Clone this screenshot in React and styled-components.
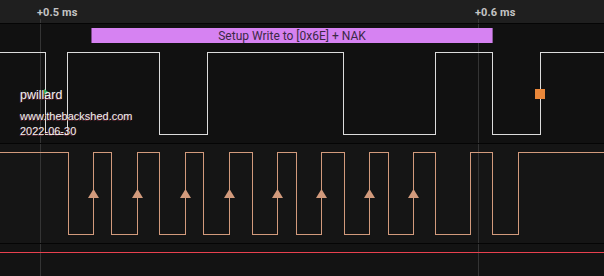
import React from 'react';
import styled, { createGlobalStyle } from 'styled-components';

const GlobalStyle = createGlobalStyle`
    html, body { margin: 0; padding: 0; background: #111; }
    body { font-family: Roboto, "Liberation Sans", sans-serif; }
`;

const WIDTH = 604;
const GRID = [40, 478];

const Screen = styled.div`
    width: ${WIDTH}px; height: 276px; overflow: hidden;
    display: flex; flex-direction: column;
    background: #141414;
`;

const TimeAxis = styled.div`
    height: 23px; flex: none; position: relative;
    background: #1f1f1f; border-bottom: 1px solid #050505;
`;

const TimeLabel = styled.span`
    position: absolute; top: 6px; left: ${p => p.$x}px;
    font-size: 11px; font-weight: 700; letter-spacing: 0.1px;
    color: #c4c4c4;
`;

const Tick = styled.i`
    position: absolute; left: ${p => p.$x}px; bottom: 0;
    width: 1px; height: 4px; background: #3a3a3a;
`;

const Channel = styled.div`
    height: ${p => p.$h}px; flex: none; position: relative;
    background: ${p => p.$bg};
    border-bottom: ${p => (p.$line ? '1px solid #050505' : 'none')};
    svg { display: block; }
`;

const Frame = styled.div`
    position: absolute; top: 4px; left: ${p => p.$x}px;
    width: ${p => p.$w}px; height: 15px;
    background: #d682f2;
    border-left: 1px solid #7a4a8a; border-right: 1px solid #8a5a9a;
    box-sizing: border-box;
    display: flex; align-items: center; justify-content: center;
    font-size: 12px; color: #3b2946;
`;

const Watermark = styled.div`
    position: absolute; left: 20px; top: 65px;
    display: flex; flex-direction: column; gap: 4px;
    font-family: "Liberation Sans", Arial, sans-serif;
    color: #f2f2f2;
    text-shadow: -1px 1px 0 rgba(110, 40, 55, 0.85);
    line-height: 1;
    .name { font-size: 12.5px; margin-bottom: 5px; }
    .line { font-size: 11px; }
`;

function wave(edges, high, low, startHigh) {
    let lvl = startHigh;
    let d = `M0 ${(lvl ? high : low) + 0.5}`;
    edges.forEach(x => {
        d += ` H${x + 0.5}`;
        lvl = !lvl;
        d += ` V${(lvl ? high : low) + 0.5}`;
    });
    d += ` H${WIDTH}`;
    return d;
}

function GridLines({ h }) {
    return GRID.map(x => (
        <rect key={x} x={x} y={0} width={1} height={h} fill="#343434" />
    ));
}

const CH1_EDGES = [45, 67, 159, 207, 343, 435, 492, 540];
const CH2_EDGES = [68, 93, 111, 137, 159, 185, 203, 229, 252, 277, 296, 321, 344, 369, 388, 413, 435, 470, 492, 518];
const ARROWS = [93, 137, 185, 229, 277, 321, 369, 413];

export default function App() {
    return (
        <>
            <GlobalStyle />
            <Screen>
                <TimeAxis>
                    <TimeLabel $x={37}>+0.5 ms</TimeLabel>
                    <TimeLabel $x={475}>+0.6 ms</TimeLabel>
                    {GRID.map(x => <Tick key={x} $x={x} />)}
                </TimeAxis>

                <Channel $h={119} $bg="#111111" $line>
                    <svg width={WIDTH} height={119} shapeRendering="crispEdges">
                        <GridLines h={119} />
                        <path d={wave(CH1_EDGES, 28, 110, true)} fill="none" stroke="#dcdcdc" strokeWidth="1" />
                        <path d="M44 65 L49 68.5 L44 72 Z" fill="#2fb060" shapeRendering="auto" />
                        <rect x={535} y={65} width={10} height={10} fill="#e9873a" />
                    </svg>
                    <Frame $x={91} $w={402}>Setup Write to [0x6E] + NAK</Frame>
                    <Watermark>
                        <span className="name">pwillard</span>
                        <span className="line">www.thebackshed.com</span>
                        <span className="line">2022-06-30</span>
                    </Watermark>
                </Channel>

                <Channel $h={99} $bg="#151515" $line>
                    <svg width={WIDTH} height={99} shapeRendering="crispEdges">
                        <GridLines h={99} />
                        <path d={wave(CH2_EDGES, 8, 90, true)} fill="none" stroke="#d29a7c" strokeWidth="1" />
                        {ARROWS.map(x => (
                            <polygon key={x} points={`${x + 0.5},45 ${x + 6},54 ${x - 5},54`} fill="#d29a7c" shapeRendering="auto" />
                        ))}
                    </svg>
                </Channel>

                <Channel $h={32} $bg="#131313">
                    <svg width={WIDTH} height={32} shapeRendering="crispEdges">
                        <GridLines h={32} />
                        <rect x={0} y={8} width={WIDTH} height={1} fill="#e8414f" />
                    </svg>
                </Channel>
            </Screen>
        </>
    );
}
